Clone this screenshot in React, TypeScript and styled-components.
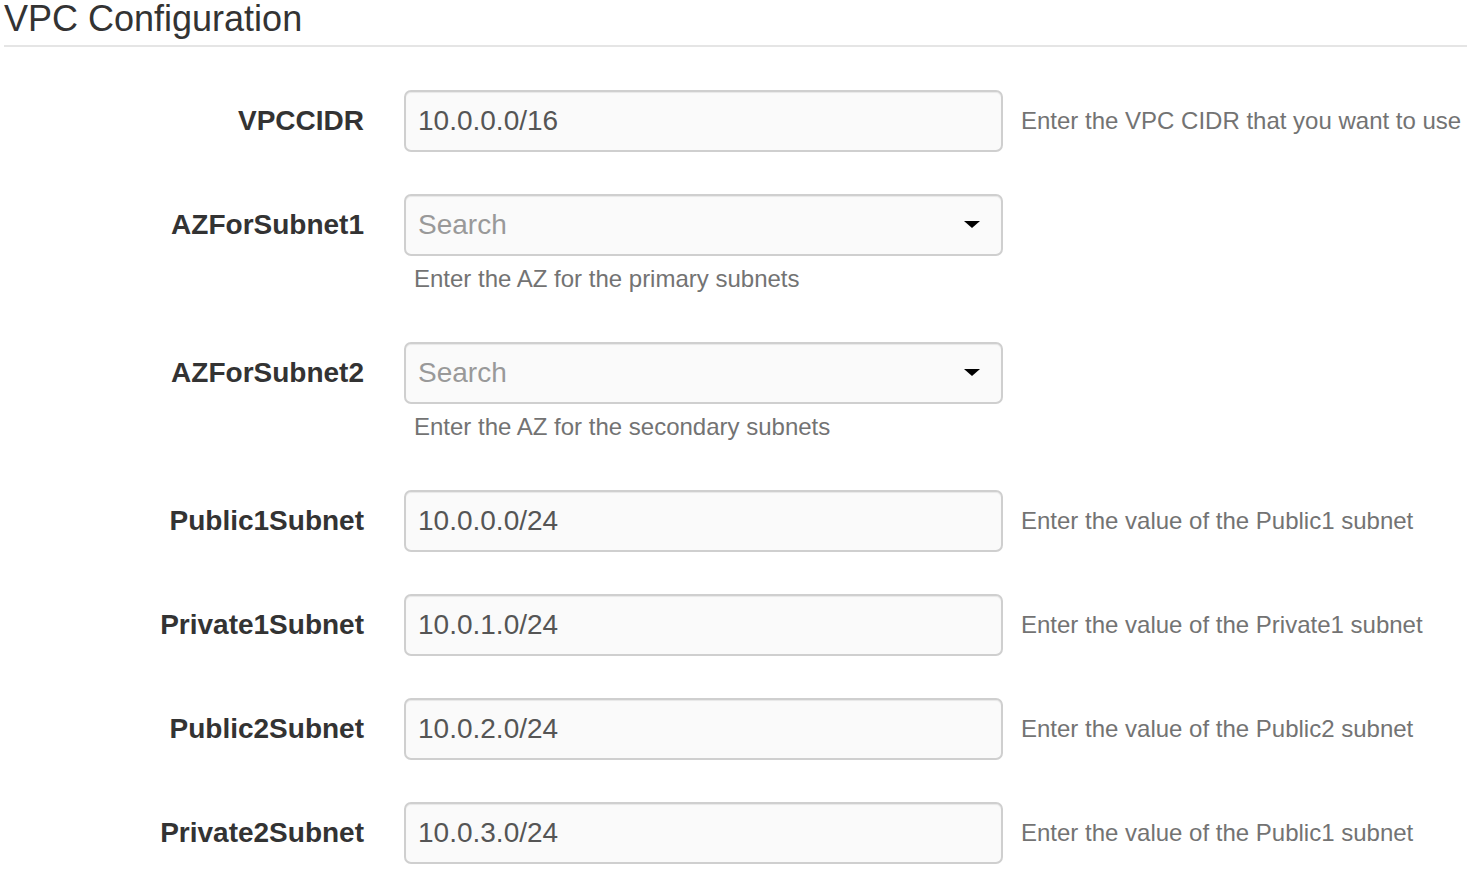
import React from "react"
import styled, { createGlobalStyle } from "styled-components"

const GlobalStyle = createGlobalStyle`
  html, body {
    margin: 0;
    padding: 0;
    background: #fff;
  }
  body {
    font-family: "Liberation Sans", Arial, sans-serif;
    color: #333;
  }
`

const Page = styled.div`
  padding: 0 0 0 4px;
`

const Legend = styled.h1`
  margin: 0;
  padding: 0 0 7px 0;
  font-size: 36px;
  font-weight: 400;
  line-height: 38px;
  color: #333;
  border-bottom: 2px solid #e5e5e5;
`

const Form = styled.div`
  display: flex;
  flex-direction: column;
  gap: 42px;
  padding-top: 43px;
`

const Row = styled.div`
  display: grid;
  grid-template-columns: 400px 599px auto;
  align-items: start;
`

const Label = styled.label`
  height: 62px;
  line-height: 62px;
  text-align: right;
  font-size: 28px;
  font-weight: 700;
  color: #333;
  padding-right: 40px;
`

const Field = styled.div`
  display: flex;
  flex-direction: column;
`

const Input = styled.div<{ $placeholder?: boolean }>`
  position: relative;
  box-sizing: border-box;
  height: 62px;
  line-height: 58px;
  padding: 0 12px;
  border: 2px solid #cfcfcf;
  border-radius: 7px;
  background: #fafafa;
  box-shadow: inset 0 1px 1px rgba(0, 0, 0, 0.075);
  font-size: 28px;
  color: ${({ $placeholder }) => ($placeholder ? "#999" : "#555")};
`

const Caret = styled.span`
  position: absolute;
  right: 21px;
  top: 25px;
  width: 0;
  height: 0;
  border-left: 8px solid transparent;
  border-right: 8px solid transparent;
  border-top: 7px solid #000;
`

const HelpBelow = styled.div`
  margin: 6px 0 4px 10px;
  font-size: 24px;
  line-height: 34px;
  color: #737373;
`

const HelpSide = styled.div`
  height: 62px;
  line-height: 62px;
  padding-left: 18px;
  font-size: 24px;
  color: #737373;
  white-space: nowrap;
`

type Param = {
  name: string
  value?: string
  select?: boolean
  help: string
}

const params: Param[] = [
  { name: "VPCCIDR", value: "10.0.0.0/16", help: "Enter the VPC CIDR that you want to use" },
  { name: "AZForSubnet1", select: true, help: "Enter the AZ for the primary subnets" },
  { name: "AZForSubnet2", select: true, help: "Enter the AZ for the secondary subnets" },
  { name: "Public1Subnet", value: "10.0.0.0/24", help: "Enter the value of the Public1 subnet" },
  { name: "Private1Subnet", value: "10.0.1.0/24", help: "Enter the value of the Private1 subnet" },
  { name: "Public2Subnet", value: "10.0.2.0/24", help: "Enter the value of the Public2 subnet" },
  { name: "Private2Subnet", value: "10.0.3.0/24", help: "Enter the value of the Public1 subnet" },
]

const ParamRow = ({ name, value, select, help }: Param) => (
  <Row>
    <Label>{name}</Label>
    <Field>
      {select ? (
        <Input $placeholder>
          Search
          <Caret />
        </Input>
      ) : (
        <Input>{value}</Input>
      )}
      {select && <HelpBelow>{help}</HelpBelow>}
    </Field>
    {!select && <HelpSide>{help}</HelpSide>}
  </Row>
)

const App = () => (
  <Page>
    <GlobalStyle />
    <Legend>VPC Configuration</Legend>
    <Form>
      {params.map((p) => (
        <ParamRow key={p.name} {...p} />
      ))}
    </Form>
  </Page>
)

export default App
